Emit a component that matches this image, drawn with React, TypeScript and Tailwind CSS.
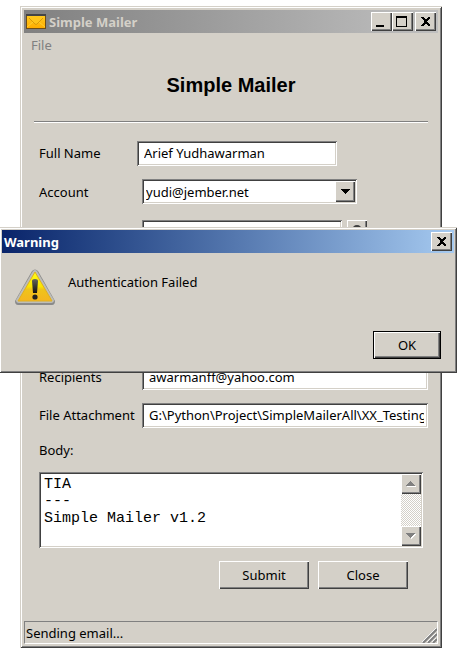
import type { ReactNode } from "react";

const raised =
  "bg-[#d4d0c8] shadow-[inset_1px_1px_0_#fff,inset_-1px_-1px_0_#404040,inset_-2px_-2px_0_#808080]";
const sunken =
  "bg-white shadow-[inset_1px_1px_0_#808080,inset_-1px_-1px_0_#fff,inset_2px_2px_0_#404040,inset_-2px_-2px_0_#d4d0c8]";
const frame =
  "bg-[#d4d0c8] shadow-[inset_1px_1px_0_#d4d0c8,inset_-1px_-1px_0_#404040,inset_2px_2px_0_#fff,inset_-2px_-2px_0_#808080]";
const field = `${sunken} h-[25px] pr-1 pb-[2px] pl-[7px] outline-none`;

function TitleButton({ label, children }: { label: string; children: ReactNode }) {
  return (
    <button type="button" aria-label={label} className={`${raised} h-[19px] w-[21px] shrink-0`}>
      <svg viewBox="0 0 21 19" className="block h-full w-full" shapeRendering="crispEdges" aria-hidden="true">
        {children}
      </svg>
    </button>
  );
}

function CloseGlyph() {
  return <path d="M6 5h2l2 2h1l2-2h2v1l-3 3v1l3 3v1h-2l-2-2h-1l-2 2h-2v-1l3-3v-1l-3-3z" fill="#000" />;
}

function MailIcon() {
  return (
    <svg viewBox="0 0 20 15" className="h-[15px] w-5 shrink-0" aria-hidden="true">
      <defs>
        <linearGradient id="mail" x1="0" y1="0" x2="0" y2="1">
          <stop offset="0" stopColor="#ffc91f" />
          <stop offset="1" stopColor="#ffad00" />
        </linearGradient>
      </defs>
      <rect width="20" height="15" fill="#6e4d17" />
      <rect width="20" height="2" fill="#444" />
      <rect x="1" y="2" width="18" height="12" fill="url(#mail)" />
      <path d="M1 13L7 8M19 13L13 8" stroke="#ffd02e" fill="none" />
      <path d="M3 4L9 10Q10 11 11 10L17 4" stroke="#d99a08" fill="#ffc51a" />
    </svg>
  );
}

function WarningIcon() {
  return (
    <svg viewBox="0 0 40 37" className="h-[37px] w-10 shrink-0" aria-hidden="true">
      <defs>
        <linearGradient id="sign" x1="0" y1="0" x2="0" y2="1">
          <stop offset="0" stopColor="#ffff18" />
          <stop offset=".5" stopColor="#fbe600" />
          <stop offset=".6" stopColor="#efc41a" />
          <stop offset="1" stopColor="#f5b520" />
        </linearGradient>
        <linearGradient id="mark" x1="0" y1="0" x2="0" y2="1">
          <stop offset="0" stopColor="#66665a" />
          <stop offset="1" stopColor="#111" />
        </linearGradient>
      </defs>
      <path d="M17 2Q20 -1 23 2L40 32Q40 36 37 36H3Q0 36 0 32Z" fill="#8a8a8a" />
      <path d="M18 2Q20 0 22 2L39 31Q39 34 36 34H4Q1 34 1 31Z" fill="#bdbdb8" />
      <path d="M20 3L37 32H3Z" fill="url(#sign)" stroke="#e0b020" strokeWidth="1" />
      <path d="M17 12Q17 10 20 10Q23 10 23 12L22 24H18Z" fill="url(#mark)" />
      <circle cx="20" cy="28" r="2.6" fill="#222" />
    </svg>
  );
}

function MailerWindow() {
  return (
    <main className={`${frame} mr-4 ml-5 p-1`}>
      <header className="flex h-[23px] items-center bg-linear-to-r from-[#808080] to-[#c0c0c0] pr-[2px] pl-[2px]">
        <MailIcon />
        <span className="ml-[3px] flex-1 font-bold text-[#d4d0c8]">Simple Mailer</span>
        <TitleButton label="Minimize">
          <path d="M5 13h8v2h-8z" fill="#000" />
        </TitleButton>
        <TitleButton label="Maximize">
          <path d="M4 4h11v11h-11zM5 6v8h9v-8z" fill="#000" fillRule="evenodd" />
        </TitleButton>
        <span className="w-[2px]" />
        <TitleButton label="Close window">
          <CloseGlyph />
        </TitleButton>
      </header>
      <nav className="flex h-6 items-center pl-[7px]">
        <button type="button" className="text-[#808080]">
          File
        </button>
      </nav>
      <h1 className="mt-4 text-center font-['Liberation_Sans',Arial,sans-serif] text-[20px] leading-6 font-bold">
        Simple Mailer
      </h1>
      <hr className="mx-[10px] mt-6 h-[2px] border-t border-b border-t-[#808080] border-b-white" />
      <form className="mt-[18px] pr-[10px] pl-[15px]" onSubmit={(e) => e.preventDefault()}>
        <div className="flex items-center">
          <label htmlFor="name" className="w-[98px] shrink-0 pb-[2px]">Full Name</label>
          <input id="name" className={`${field} w-[200px]`} defaultValue="Arief Yudhawarman" />
        </div>
        <div className="mt-[13px] flex items-center">
          <label htmlFor="account" className="w-[103px] shrink-0">Account</label>
          <div className="relative w-[215px]">
            <select id="account" className={`${sunken} block h-[25px] w-full appearance-none pl-1 outline-none`}>
              <option>yudi@jember.net</option>
            </select>
            <span className={`${raised} pointer-events-none absolute top-[2px] right-[2px] flex h-[21px] w-5 items-center justify-center`}>
              <svg viewBox="0 0 9 5" className="h-[5px] w-[9px]" shapeRendering="crispEdges" aria-hidden="true">
                <path d="M0 0h9v1h-1v1h-1v1h-1v1h-1v1h-1v-1h-1v-1h-1v-1h-1v-1h-1z" />
              </svg>
            </span>
          </div>
        </div>
        <div className="mt-4 flex items-center">
          <label htmlFor="password" className="w-[103px] shrink-0 pb-[2px]">Password</label>
          <input id="password" type="password" className={`${field} w-[200px]`} />
          <button type="button" aria-label="Show password" className={`${raised} ml-[5px] flex h-[25px] w-5 justify-center pt-[5px]`}>
            <svg viewBox="0 0 10 10" className="h-[10px] w-[10px]" aria-hidden="true">
              <circle cx="5" cy="5" r="4" fill="#808080" stroke="#404040" strokeWidth="2" />
            </svg>
          </button>
        </div>
        <div className="mt-[120px] flex items-center">
          <label htmlFor="recipients" className="w-[103px] shrink-0 pb-[2px]">Recipients</label>
          <input id="recipients" className={`${field} min-w-0 flex-1`} defaultValue="awarmanff@yahoo.com" />
        </div>
        <div className="mt-[13px] flex items-center">
          <label htmlFor="attachment" className="w-[103px] shrink-0 pb-[2px]">File Attachment</label>
          <input
            id="attachment"
            className={`${field} min-w-0 flex-1`}
            defaultValue="G:\Python\Project\SimpleMailerAll\XX_Testing\"
          />
        </div>
        <label htmlFor="body" className="mt-3 block leading-5">Body:</label>
        <div className={`${sunken} mt-3 mr-[5px] flex h-[76px] p-[2px]`}>
          <textarea
            id="body"
            className="min-w-0 flex-1 resize-none overflow-hidden px-[3px] py-[2px] font-['Liberation_Mono','Courier_New',monospace] text-[15px] leading-[17px] outline-none"
            defaultValue={"TIA\n---\nSimple Mailer v1.2"}
          />
          <div className="flex w-5 flex-col justify-between bg-[repeating-conic-gradient(#d4d0c8_0_25%,#fff_0_50%)] bg-size-[2px_2px]">
            <button type="button" aria-label="Scroll up" className={`${raised} flex h-5 items-center justify-center`}>
              <svg viewBox="0 0 10 6" className="h-[6px] w-[10px]" shapeRendering="crispEdges" aria-hidden="true">
                <path d="M1 5h9v1h-9z" fill="#fff" />
                <path d="M4 0h1v1h1v1h1v1h1v1h1v1h-9v-1h1v-1h1v-1h1v-1h1z" fill="#808080" />
              </svg>
            </button>
            <button type="button" aria-label="Scroll down" className={`${raised} flex h-5 items-center justify-center`}>
              <svg viewBox="0 0 10 6" className="h-[6px] w-[10px]" shapeRendering="crispEdges" aria-hidden="true">
                <path d="M1 1h9v1h-1v1h-1v1h-1v1h-1v1h-1v-1h-1v-1h-1v-1h-1v-1h-1z" fill="#fff" />
                <path d="M0 0h9v1h-1v1h-1v1h-1v1h-1v1h-1v-1h-1v-1h-1v-1h-1v-1h-1z" fill="#808080" />
              </svg>
            </button>
          </div>
        </div>
        <div className="mt-[13px] mr-5 flex justify-end gap-[9px]">
          <button type="submit" className={`${raised} h-7 w-[90px]`}>Submit</button>
          <button type="button" className={`${raised} h-7 w-[90px]`}>Close</button>
        </div>
      </form>
      <footer className="mt-8 flex h-[23px] items-center justify-between border border-t-[#808080] border-r-white border-b-white border-l-[#808080] pl-[1px]">
        <output>Sending email...</output>
        <svg viewBox="0 0 16 16" className="h-4 w-4 self-end bg-[#d4d0c8]" aria-hidden="true">
          <path d="M1 15L15 1M6 15L15 6M11 15L15 11" stroke="#fff" strokeWidth="1" />
          <path d="M2 16L16 2M7 16L16 7M12 16L16 12" stroke="#808080" strokeWidth="2" />
        </svg>
      </footer>
    </main>
  );
}

function WarningDialog() {
  return (
    <section
      role="alertdialog"
      aria-labelledby="warning-title"
      aria-describedby="warning-text"
      className={`${frame} absolute top-[227px] right-[1px] -left-px flex h-[146px] flex-col p-[3px]`}
    >
      <header className="flex h-[23px] items-center bg-linear-to-r from-[#0a246a] to-[#a6caf0] pr-[2px] pl-[2px]">
        <h2 id="warning-title" className="flex-1 font-bold text-white">Warning</h2>
        <TitleButton label="Close dialog">
          <CloseGlyph />
        </TitleButton>
      </header>
      <div className="flex gap-[13px] pt-4 pl-[13px]">
        <WarningIcon />
        <p id="warning-text" className="pt-[3px] leading-5">Authentication Failed</p>
      </div>
      <button
        type="button"
        className="mt-auto mr-[13px] mb-[11px] h-7 w-[68px] self-end border border-black bg-[#d4d0c8] shadow-[inset_1px_1px_0_#fff,inset_-1px_-1px_0_#404040,inset_-2px_-2px_0_#808080]"
      >
        OK
      </button>
    </section>
  );
}

export default function App() {
  return (
    <div className="relative min-h-screen bg-white pt-[6px] font-['Noto_Sans','Open_Sans',Tahoma,sans-serif] text-[13px] leading-[18px] text-black">
      <MailerWindow />
      <WarningDialog />
    </div>
  );
}
